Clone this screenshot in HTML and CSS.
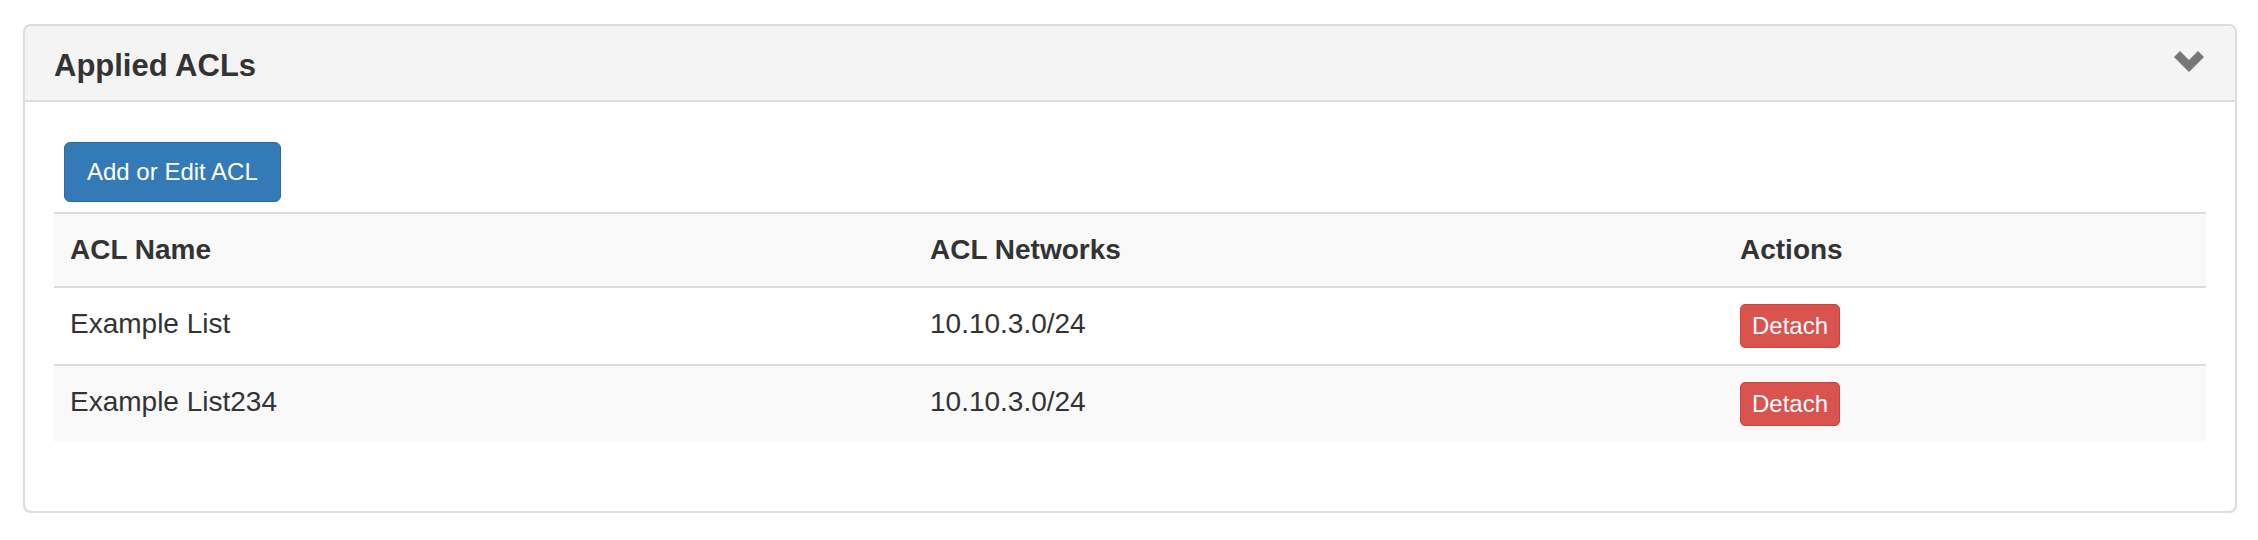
FILE: index.html
```html
<!DOCTYPE html>
<html>
<head>
<meta charset="utf-8">
<title>Applied ACLs</title>
<link rel="stylesheet" href="styles.css">
</head>
<body>
<div class="panel">
  <div class="panel-heading">
    <h3 class="panel-title">Applied ACLs</h3>
    <svg class="chevron" width="30" height="21" viewBox="0 0 30 21"><polygon points="0,6 6,0 15,9 24,0 30,6 15,21" fill="#777"/></svg>
  </div>
  <div class="panel-body">
    <div class="toolbar">
      <button class="btn btn-primary">Add or Edit ACL</button>
    </div>
    <table class="acl-table">
      <colgroup>
        <col class="col-name">
        <col class="col-net">
        <col class="col-act">
      </colgroup>
      <thead>
        <tr><th>ACL Name</th><th>ACL Networks</th><th>Actions</th></tr>
      </thead>
      <tbody>
        <tr><td>Example List</td><td>10.10.3.0/24</td><td><button class="btn btn-danger">Detach</button></td></tr>
        <tr class="striped"><td>Example List234</td><td>10.10.3.0/24</td><td><button class="btn btn-danger">Detach</button></td></tr>
      </tbody>
    </table>
  </div>
</div>
</body>
</html>
```
FILE: styles.css
```css
html, body {
  margin: 0;
  padding: 0;
  background: #fff;
}
body {
  font-family: "Liberation Sans", Arial, Helvetica, sans-serif;
  color: #333;
  font-size: 28px;
}
.panel {
  margin: 24px 21px 0 23px;
  border: 2px solid #ddd;
  border-radius: 8px;
  background: #fff;
  box-shadow: 0 1px 2px rgba(0,0,0,0.06);
  height: 489px;
  box-sizing: border-box;
}
.panel-heading {
  display: flex;
  align-items: flex-start;
  justify-content: space-between;
  background: #f4f4f4;
  border-bottom: 2px solid #ddd;
  border-radius: 6px 6px 0 0;
  padding: 0 31px 0 29px;
  height: 74px;
}
.panel-title {
  margin: 0;
  padding-top: 24px;
  font-size: 31px;
  line-height: 31px;
  font-weight: 700;
  color: #333;
}
.chevron {
  display: block;
  margin-top: 25px;
}
.panel-body {
  padding: 40px 29px 0 29px;
}
.toolbar {
  padding-left: 10px;
  margin-bottom: 10px;
}
.btn {
  font-family: "Liberation Sans", Arial, Helvetica, sans-serif;
  color: #fff;
  cursor: pointer;
  display: inline-block;
  margin: 0;
}
.btn-primary {
  font-size: 24px;
  line-height: 30px;
  padding: 14px 22px;
  background: #337ab7;
  border: 1px solid #2e6da4;
  border-radius: 6px;
}
.btn-danger {
  font-size: 24px;
  line-height: 32px;
  padding: 5px 11px;
  background: #d9534f;
  border: 1px solid #d43f3a;
  border-radius: 5px;
}
.acl-table {
  width: 2152px;
  border-collapse: collapse;
  table-layout: fixed;
}
.col-name { width: 860px; }
.col-net { width: 810px; }
.col-act { width: 482px; }
.acl-table th,
.acl-table td {
  text-align: left;
  vertical-align: top;
  padding: 16px 16px;
  line-height: 40px;
  font-size: 28px;
}
.acl-table thead th {
  background: #f9f9f9;
  border-top: 2px solid #ddd;
  border-bottom: 2px solid #ddd;
  font-weight: 700;
}
.acl-table tbody td {
  height: 44px;
  line-height: 40px;
}
.acl-table tbody tr + tr td {
  border-top: 2px solid #ddd;
}
.acl-table tbody tr.striped td {
  background: #f9f9f9;
}
```
